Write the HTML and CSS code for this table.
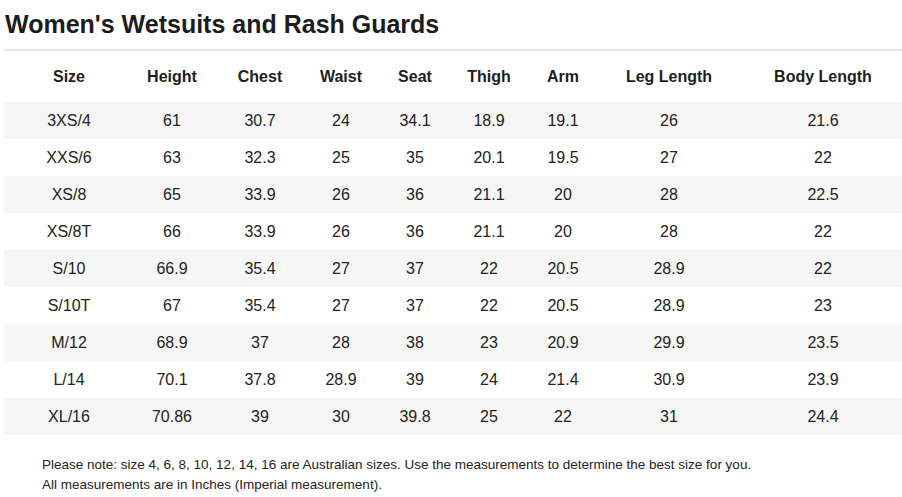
FILE: index.html
```html
<!DOCTYPE html>
<html lang="en">
<head>
<meta charset="utf-8">
<title>Women's Wetsuits and Rash Guards</title>
<link rel="stylesheet" href="styles.css">
</head>
<body>
<div class="page">
  <header class="head">
    <h1 class="title">Women's Wetsuits and Rash Guards</h1>
  </header>
  <div class="table-wrap">
    <table class="sizes">
      <colgroup>
        <col class="c1"><col class="c2"><col class="c3"><col class="c4"><col class="c5"><col class="c6"><col class="c7"><col class="c8"><col class="c9">
      </colgroup>
      <thead>
        <tr><th>Size</th><th>Height</th><th>Chest</th><th>Waist</th><th>Seat</th><th>Thigh</th><th>Arm</th><th>Leg Length</th><th>Body Length</th></tr>
      </thead>
      <tbody>
        <tr><td>3XS/4</td><td>61</td><td>30.7</td><td>24</td><td>34.1</td><td>18.9</td><td>19.1</td><td>26</td><td>21.6</td></tr>
        <tr><td>XXS/6</td><td>63</td><td>32.3</td><td>25</td><td>35</td><td>20.1</td><td>19.5</td><td>27</td><td>22</td></tr>
        <tr><td>XS/8</td><td>65</td><td>33.9</td><td>26</td><td>36</td><td>21.1</td><td>20</td><td>28</td><td>22.5</td></tr>
        <tr><td>XS/8T</td><td>66</td><td>33.9</td><td>26</td><td>36</td><td>21.1</td><td>20</td><td>28</td><td>22</td></tr>
        <tr><td>S/10</td><td>66.9</td><td>35.4</td><td>27</td><td>37</td><td>22</td><td>20.5</td><td>28.9</td><td>22</td></tr>
        <tr><td>S/10T</td><td>67</td><td>35.4</td><td>27</td><td>37</td><td>22</td><td>20.5</td><td>28.9</td><td>23</td></tr>
        <tr><td>M/12</td><td>68.9</td><td>37</td><td>28</td><td>38</td><td>23</td><td>20.9</td><td>29.9</td><td>23.5</td></tr>
        <tr><td>L/14</td><td>70.1</td><td>37.8</td><td>28.9</td><td>39</td><td>24</td><td>21.4</td><td>30.9</td><td>23.9</td></tr>
        <tr><td>XL/16</td><td>70.86</td><td>39</td><td>30</td><td>39.8</td><td>25</td><td>22</td><td>31</td><td>24.4</td></tr>
      </tbody>
    </table>
  </div>
  <div class="notes">
    <p>Please note: size 4, 6, 8, 10, 12, 14, 16 are Australian sizes. Use the measurements to determine the best size for you.</p>
    <p>All measurements are in Inches (Imperial measurement).</p>
  </div>
</div>
</body>
</html>
```
FILE: styles.css
```css
html, body {
  margin: 0;
  padding: 0;
  background: #ffffff;
}
body {
  font-family: "Liberation Sans", Arial, sans-serif;
  color: #222222;
  overflow: hidden;
}
.page {
  padding-left: 4px;
  width: 898px;
}
.head {
  height: 51px;
  border-bottom: 2px solid #e6e6e6;
  box-sizing: border-box;
  display: flex;
  align-items: center;
}
.title {
  margin: 0 0 1px 1px;
  font-size: 25px;
  font-weight: 700;
  color: #1c1c1c;
  line-height: 32px;
}
.table-wrap {
  overflow: hidden;
  width: 898px;
}
.sizes {
  border-collapse: collapse;
  table-layout: fixed;
  width: 910px;
}
.c1 { width: 130px; }
.c2 { width: 76px; }
.c3 { width: 100px; }
.c4 { width: 62px; }
.c5 { width: 86px; }
.c6 { width: 62px; }
.c7 { width: 86px; }
.c8 { width: 126px; }
.c9 { width: 182px; }
.sizes th, .sizes td {
  padding: 0;
  text-align: center;
  white-space: nowrap;
}
.sizes th {
  height: 51px;
  font-size: 16px;
  font-weight: 700;
  color: #1e1e1e;
}
.sizes td {
  height: 37px;
  font-size: 16px;
  color: #222222;
}
.sizes tbody tr:nth-child(odd) td {
  background: #f6f6f6;
}
.notes {
  padding: 20px 0 0 38px;
  font-size: 13.5px;
  line-height: 20px;
  color: #222222;
}
.notes p {
  margin: 0;
}
```
